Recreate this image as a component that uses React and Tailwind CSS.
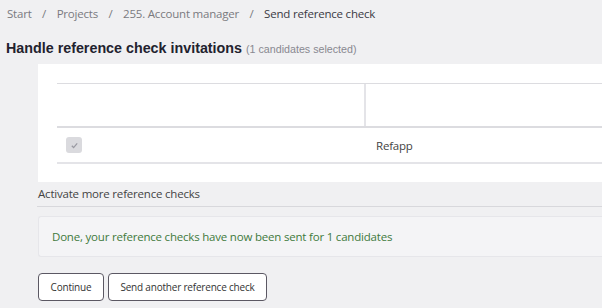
const crumbs = ['Start', 'Projects', '255. Account manager'];

const App = () => {
  return (
    <div className="min-h-[308px] w-[602px] overflow-hidden bg-[#f0f0f2] font-['Open_Sans',sans-serif] tracking-[-0.2px]">
      <div className="flex h-[28px] items-center pl-[7px] text-[11.5px] text-[#7a7a7f]">
        {crumbs.map((c) => (
          <span key={c} className="flex items-center">
            <span>{c}</span>
            <span className="px-[10.5px]">/</span>
          </span>
        ))}
        <span className="text-[#3a3a44]">Send reference check</span>
      </div>

      <div className="flex h-[36px] items-center pt-[5px] pl-[6px] font-['Liberation_Sans',Arial,sans-serif] tracking-normal">
        <h1 className="text-[14.3px] font-bold text-[#22222e]">Handle reference check invitations</h1>
        <span className="ml-[4px] mt-[2px] text-[10.7px] text-[#888890]">(1 candidates selected)</span>
      </div>

      <div className="ml-[38px] bg-white pb-[18px] pl-[19px] pt-[19px]">
        <div className="border-t border-[#dcdce0]">
          <div className="flex h-[44px] border-b-2 border-[#dcdce0]">
            <div className="w-[309px] border-r-2 border-[#e4e4e8]"></div>
            <div className="flex-1"></div>
          </div>
          <div className="flex h-[36px] items-center border-b-2 border-[#e4e4e8] pt-[2px] text-[11.5px] text-[#444]">
            <div className="flex w-[319px] items-center pl-[9px]">
              <div className="-mt-[2px] flex h-[16px] w-[16px] items-center justify-center rounded-[3px] bg-[#dadade]">
                <svg width="9" height="9" viewBox="0 0 10 10">
                  <path d="M2 5.3l2 2 4-4.6" fill="none" stroke="#9a9aa2" strokeWidth="1.4" />
                </svg>
              </div>
            </div>
            <div>Refapp</div>
          </div>
        </div>
      </div>

      <div className="ml-[37px] flex h-[25px] items-center border-b border-[#d8d8dc] pl-[1px] text-[11.5px] text-[#444]">
        Activate more reference checks
      </div>

      <div className="ml-[38px] mt-[9px] flex h-[41px] items-center rounded-l-[3px] border border-r-0 border-[#e6e6ea] bg-[#f4f4f6] pl-[13px] text-[11.5px] text-[#3f7a3c]">
        Done, your reference checks have now been sent for 1 candidates
      </div>

      <div className="ml-[38px] mt-[16px] flex gap-[4px] text-[10px] text-[#333]">
        <button className="h-[28px] w-[66px] rounded-[4px] border border-[#5b5863] bg-white">Continue</button>
        <button className="h-[28px] w-[159px] rounded-[4px] border border-[#5b5863] bg-white">Send another reference check</button>
      </div>
    </div>
  );
};

export default App;
